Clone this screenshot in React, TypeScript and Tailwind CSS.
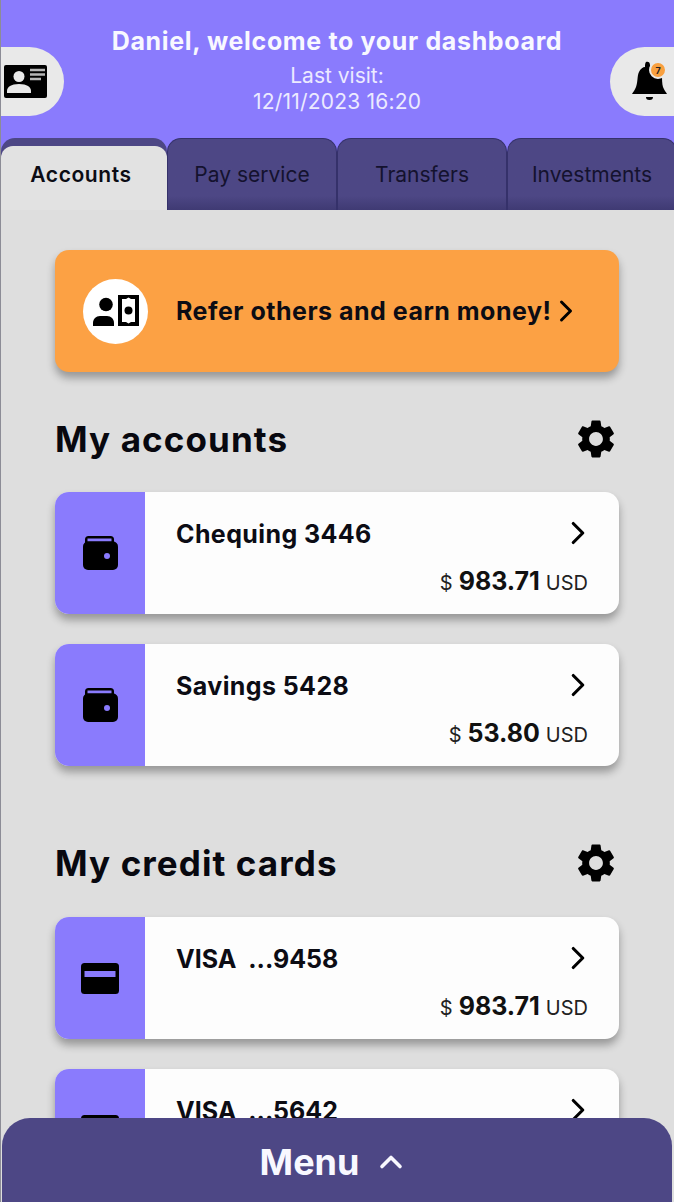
import React from 'react';
import { ChevronRight, ChevronUp } from 'lucide-react';
import { MdSettings } from 'react-icons/md';

const tabs = ['Pay service', 'Transfers', 'Investments'];

function IdCardIcon() {
  return (
    <svg width="43" height="33" viewBox="0 0 43 33">
      <rect x="0" y="0" width="43" height="33" rx="2" fill="#000" />
      <circle cx="15" cy="11.500" r="5.500" fill="#e9e9e9" />
      <path d="M3 28v-2c0-4 4-7 12-7s12 3 12 7v2z" fill="#e9e9e9" />
      <path d="M26 5h15M26 9.500h15M26 14h11" stroke="#b5b5b5" strokeWidth="2.500" />
    </svg>
  );
}

function BellIcon() {
  return (
    <svg width="35" height="42" viewBox="0 0 35 42">
      <path d="M14 1c2-1 4 0 4 3 0 2 1 6 4 8 3 2 6 2 8 1 0 5 0 10 1 13 1 3 3 5 4 7H0c1-2 3-4 4-7 2-5 1-11 3-15 1-3 4-5 6-5 0-2 0-4 1-5z" fill="#000" />
      <path d="M14 36h7c0 2-1 3-3.500 3S14 38 14 36z" fill="#000" />
    </svg>
  );
}

function ReferIcon() {
  return (
    <svg width="46" height="32" viewBox="0 0 46 32">
      <circle cx="13" cy="9.500" r="6.800" fill="#000" />
      <path d="M0 31v-3c0-4 3-7 7-7h7c4 0 7 3 7 7v3z" fill="#000" />
      <rect x="25" y="0" width="21" height="31" fill="#000" />
      <path d="M29 4h4l2.500-1.500L38 4h4v23h-4l-2.500 1.500L33 27h-4z" fill="#fff" />
      <circle cx="35.500" cy="15.500" r="4" fill="#000" />
    </svg>
  );
}

function WalletIcon() {
  return (
    <svg width="35" height="34" viewBox="0 0 35 34">
      <rect x="2" y="0" width="29" height="12" rx="3.500" fill="#000" />
      <rect x="4.500" y="2.500" width="24" height="3" fill="#8a7bfd" />
      <rect x="0" y="5.500" width="35" height="28.500" rx="5" fill="#000" />
      <circle cx="24" cy="20" r="3" fill="#8a7bfd" />
    </svg>
  );
}

function CardIcon() {
  return (
    <svg width="38" height="31" viewBox="0 0 38 31">
      <rect x="0" y="0" width="38" height="31" rx="3.500" fill="#000" />
      <rect x="3.500" y="8" width="31" height="6" fill="#8a7bfd" />
    </svg>
  );
}

function AccountCard({ name, amount, icon, tight }: { name: string; amount?: string; icon: React.ReactNode; tight?: boolean }) {
  return (
    <div className="flex h-[122px] shrink-0 overflow-hidden rounded-[14px] bg-[#fdfdfd] shadow-[0_6px_8px_rgba(0,0,0,0.32)]">
      <div className="flex w-[90px] shrink-0 items-center justify-center bg-[#8a7bfd]">{icon}</div>
      <div className="flex-1 pl-[31px] pr-[31px] pt-[23px]">
        <div className="flex items-center justify-between">
          <span className={tight ? 'whitespace-pre text-[25px] font-bold leading-[36px] text-[#0c0c14]' : 'whitespace-pre text-[25px] font-bold leading-[36px] tracking-[0.4px] text-[#0c0c14]'}>{name}</span>
          <ChevronRight size={38} strokeWidth={2} className="mr-[-9px] mt-[-1px] text-black" />
        </div>
        {amount && (
          <div className="mt-[11px] flex items-baseline justify-end gap-[6px] text-[20px] leading-[36px] text-[#222]">
            <span>$</span>
            <span className="text-[25px] font-bold text-[#111]">{amount}</span>
            <span>USD</span>
          </div>
        )}
      </div>
    </div>
  );
}

function SectionHeading({ title }: { title: string }) {
  return (
    <div className="flex h-[46px] items-center justify-between">
      <h2 className="text-[35px] font-bold tracking-[1.1px] text-[#08080f]">{title}</h2>
      <MdSettings size={46} className="text-black" />
    </div>
  );
}

export default function App() {
  return (
    <div className="relative h-[1202px] w-[674px] overflow-hidden border-l border-[#8c8c96] bg-[#dedede] font-['Inter','Liberation_Sans',sans-serif]">
      <header className="flex h-[138px] items-start justify-between bg-[#8a7bfd]">
        <div className="mt-[47px] flex h-[69px] w-[63px] items-center justify-start rounded-r-full bg-[#e9e9e9] pl-[3px]">
          <IdCardIcon />
        </div>
        <div className="pt-[24px] text-center">
          <h1 className="text-[25px] font-bold leading-[34px] tracking-[0.65px] text-[#f8f8ff]">Daniel, welcome to your dashboard</h1>
          <p className="mt-[5px] text-[21px] leading-[26px] text-[#eceaff]">Last visit:</p>
          <p className="text-[21px] leading-[26px] tracking-[0.2px] text-[#eceaff]">12/11/2023 16:20</p>
        </div>
        <div className="relative mt-[47px] flex h-[69px] w-[64px] items-center justify-start rounded-l-full bg-[#e9e9e9] pl-[22px]">
          <BellIcon />
          <span className="absolute left-[39px] top-[14px] flex h-[18px] w-[18px] items-center justify-center rounded-full border-2 border-[#e9e9e9] bg-[#f9a03f] text-[9px] font-bold leading-none text-[#222]">7</span>
        </div>
      </header>

      <nav className="flex h-[72px] bg-[#8a7bfd]">
        <div className="h-full w-[166px] shrink-0 rounded-t-[14px] bg-[#4d4785] pt-[8px]">
          <div className="flex h-full items-center justify-center rounded-t-[12px] bg-[#e2e2e2] pb-[6px] pr-[6px] text-[21px] font-semibold tracking-[0.6px] text-[#0c0c14]">Accounts</div>
        </div>
        {tabs.map(tab => (
          <div
            key={tab}
            className="flex h-full w-[170px] shrink-0 items-center justify-center rounded-t-[14px] border border-b-0 border-[#35316a] bg-gradient-to-b from-[#4d4785] from-80% to-[#3f3a73] text-[21px] text-[#14122e]"
          >
            {tab}
          </div>
        ))}
      </nav>

      <main className="flex flex-col pl-[54px] pr-[55px] pt-[40px]">
        <div className="flex h-[122px] items-center rounded-[14px] bg-[#fca144] pl-[28px] shadow-[0_6px_8px_rgba(0,0,0,0.32)]">
          <div className="flex h-[65px] w-[65px] items-center justify-center rounded-full bg-white">
            <ReferIcon />
          </div>
          <span className="ml-[28px] mt-[1px] text-[25px] font-bold tracking-[0.5px] text-[#0c0c14]">Refer others and earn money!</span>
          <ChevronRight size={36} strokeWidth={2} className="ml-[-3px] text-black" />
        </div>

        <div className="mt-[44px]">
          <SectionHeading title="My accounts" />
        </div>
        <div className="mt-[30px] flex flex-col gap-[30px]">
          <AccountCard name="Chequing 3446" amount="983.71" icon={<WalletIcon />} />
          <AccountCard name="Savings 5428" amount="53.80" icon={<WalletIcon />} />
        </div>

        <div className="mt-[74px]">
          <SectionHeading title="My credit cards" />
        </div>
        <div className="mt-[31px] flex flex-col gap-[30px]">
          <AccountCard name="VISA  ...9458" amount="983.71" icon={<CardIcon />} tight />
          <AccountCard name="VISA  ...5642" amount="53.80" icon={<CardIcon />} tight />
        </div>
      </main>

      <footer className="absolute bottom-0 left-[1px] right-[2px] flex h-[84px] items-center justify-center gap-[14px] rounded-t-[28px] bg-[#4d4785] pr-[5px] pt-[3px] text-[#f8f8ff]">
        <span className="text-[36px] font-bold">Menu</span>
        <ChevronUp size={36} strokeWidth={2.4} />
      </footer>
    </div>
  );
}
